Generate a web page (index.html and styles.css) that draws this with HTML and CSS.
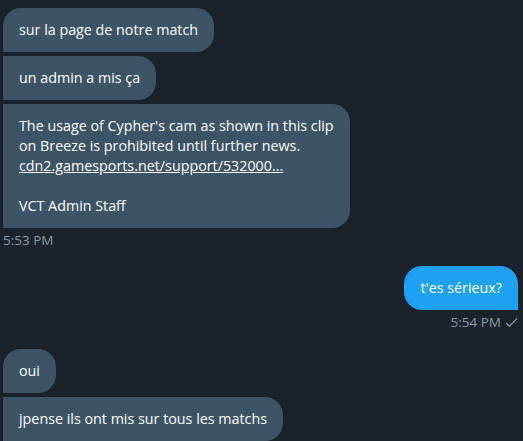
FILE: index.html
```html
<!DOCTYPE html>
<html lang="fr">
<head>
<meta charset="utf-8">
<link rel="stylesheet" href="styles.css">
</head>
<body>
<div class="chat">
  <div class="group received">
    <div class="bubble">sur la page de notre match</div>
    <div class="bubble">un admin a mis ça</div>
    <div class="bubble">The usage of Cypher's cam as shown in this clip<br>on Breeze is prohibited until further news.<br><a class="link" href="#">cdn2.gamesports.net/support/532000...</a><br><br>VCT Admin Staff</div>
    <div class="time">5:53 PM</div>
  </div>
  <div class="group sent">
    <div class="bubble">t'es sérieux?</div>
    <div class="time">5:54 PM <svg class="check" viewBox="0 0 14 12" width="13" height="11"><path d="M1 6.5 L4.8 10.2 L13 1.5" fill="none" stroke="currentColor" stroke-width="1.3"/></svg></div>
  </div>
  <div class="group received">
    <div class="bubble">oui</div>
    <div class="bubble">jpense ils ont mis sur tous les matchs</div>
  </div>
</div>
</body>
</html>
```

FILE: styles.css
```css
html, body {
  margin: 0;
  padding: 0;
  background: #1a222b;
  height: 100%;
  overflow: hidden;
}
body {
  font-family: "Open Sans", "Noto Sans", sans-serif;
  color: #ffffff;
}
.chat {
  display: flex;
  flex-direction: column;
  padding: 8px 5px 0 3px;
}
.group {
  display: flex;
  flex-direction: column;
  gap: 4px;
}
.received { align-items: flex-start; }
.sent { align-items: flex-end; }
.group.received + .group.sent { margin-top: 18px; }
.group.sent + .group.received { margin-top: 19px; }
.bubble {
  font-size: 14.3px;
  line-height: 20px;
  padding: 12px 16px;
  background: #3d5466;
  border-radius: 18px 18px 18px 0;
  white-space: nowrap;
}
.received .bubble:not(:first-child) { border-top-left-radius: 0; }
.sent .bubble {
  background: #1da1f2;
  border-radius: 18px 18px 0 18px;
}
.link { color: #ffffff; text-decoration: underline; }
.time {
  font-size: 13.5px;
  line-height: 16px;
  color: #8899a6;
  display: flex;
  align-items: center;
  gap: 4px;
}
.check { color: #8899a6; }
```
